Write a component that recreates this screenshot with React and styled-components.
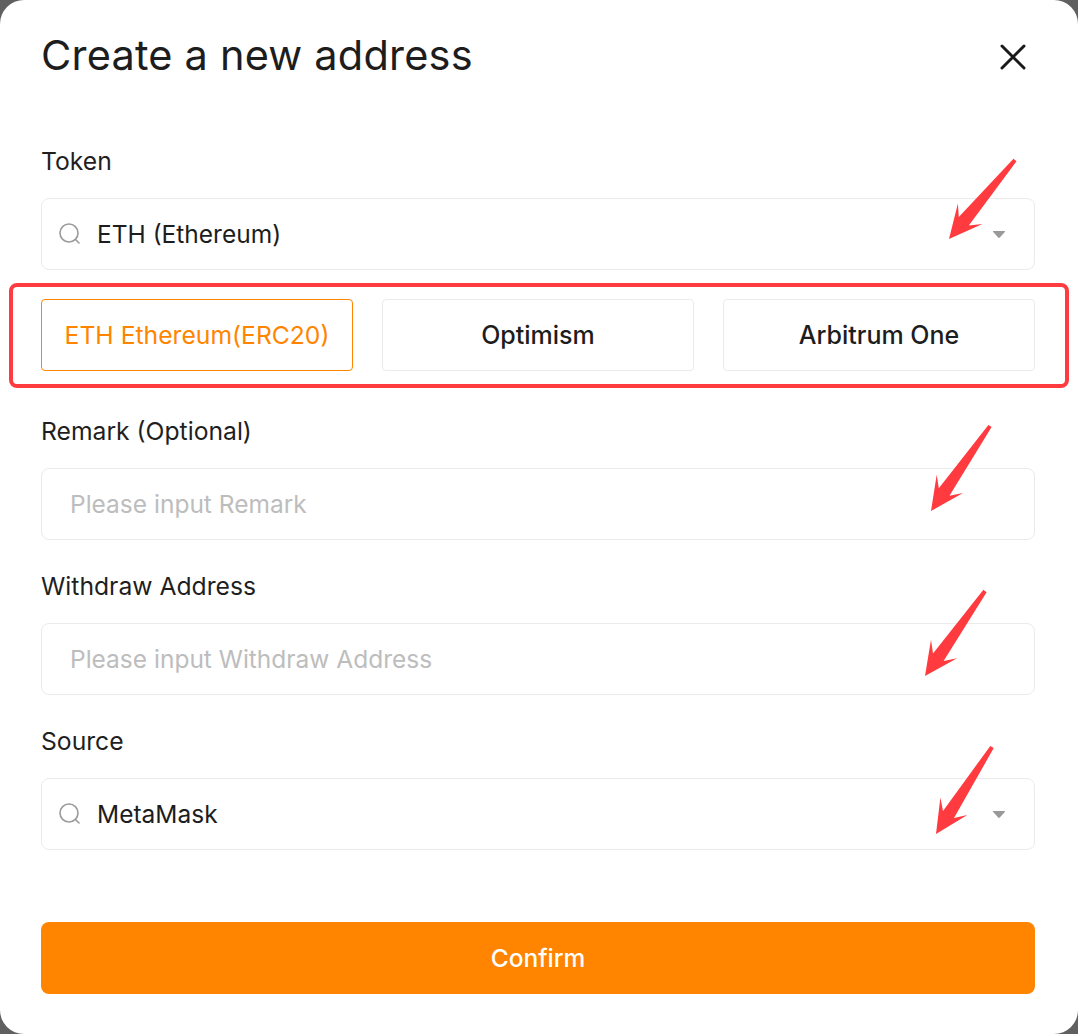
import React from "react"
import styled, { createGlobalStyle } from "styled-components"

const GlobalStyle = createGlobalStyle`
  html, body {
    margin: 0;
    padding: 0;
    background: #606060;
  }
  * {
    box-sizing: border-box;
  }
`

const FONT = `Inter, "Noto Sans", "Liberation Sans", sans-serif`
const ORANGE = "#ff8500"
const MARK = "#ff3b3f"

const Modal = styled.div`
  position: relative;
  width: 1078px;
  height: 1034px;
  background: #fff;
  border-radius: 24px;
  padding: 0 43px 0 41px;
  font-family: ${FONT};
  color: #1d1d1d;
  overflow: hidden;
`

const Header = styled.div`
  display: flex;
  align-items: center;
  justify-content: space-between;
  height: 56px;
  margin-top: 27px;
  margin-bottom: 61px;
`

const Title = styled.h1`
  margin: 0;
  font-size: 41.5px;
  font-weight: 400;
  line-height: 56px;
  letter-spacing: 0.2px;
`

const CloseButton = styled.button`
  display: flex;
  align-items: center;
  justify-content: center;
  width: 30px;
  height: 30px;
  margin: 4px 7px 0 0;
  padding: 0;
  border: none;
  background: none;
  cursor: pointer;
`

const Field = styled.div`
  display: flex;
  flex-direction: column;
  margin-top: ${(p) => p.$gap || 0}px;
`

const Label = styled.label`
  font-size: 24.7px;
  line-height: 34px;
  margin-bottom: 20px;
  color: #1f1f1f;
`

const Box = styled.div`
  display: flex;
  align-items: center;
  height: 72px;
  border: 1px solid #ebebeb;
  border-radius: 8px;
  padding: 0 28px 0 16px;
  gap: 15px;
`

const BoxText = styled.span`
  flex: 1;
  font-size: 24.5px;
  color: #1d1d1d;
`

const Input = styled.input`
  height: 72px;
  border: 1px solid #ebebeb;
  border-radius: 8px;
  padding: 0 28px;
  font-family: ${FONT};
  font-size: 24.5px;
  color: #1d1d1d;
  outline: none;
  &::placeholder {
    color: #bdbdbd;
  }
`

const NetworkRow = styled.div`
  display: grid;
  grid-template-columns: repeat(3, 1fr);
  gap: 29px;
  margin-top: 29px;
`

const NetworkButton = styled.button`
  height: 72px;
  border: 1px solid ${(p) => (p.$active ? ORANGE : "#ebebeb")};
  border-radius: 4px;
  background: #fff;
  font-family: ${FONT};
  font-size: ${(p) => (p.$active ? 24.7 : 25)}px;
  font-weight: ${(p) => (p.$active ? 400 : 500)};
  color: ${(p) => (p.$active ? ORANGE : "#1d1d1d")};
  cursor: pointer;
`

const ConfirmButton = styled.button`
  width: 100%;
  height: 72px;
  margin-top: 72px;
  border: none;
  border-radius: 8px;
  background: ${ORANGE};
  color: #fff;
  font-family: ${FONT};
  font-size: 24.5px;
  font-weight: 500;
  cursor: pointer;
`

// annotation layer drawn over the form
const Highlight = styled.div`
  position: absolute;
  left: 9px;
  top: 283px;
  width: 1060px;
  height: 105px;
  border: 4px solid ${MARK};
  border-radius: 8px;
  pointer-events: none;
`

const Overlay = styled.svg`
  position: absolute;
  left: 0;
  top: 0;
  pointer-events: none;
`

const SearchIcon = () => (
  <svg width="24" height="24" viewBox="0 0 24 24" fill="none">
    <circle cx="11" cy="11" r="9" stroke="#9a9a9a" strokeWidth="1.6" />
    <path d="M17.5 17.5 L21 21" stroke="#9a9a9a" strokeWidth="1.6" strokeLinecap="round" />
  </svg>
)

const Caret = () => (
  <svg width="14" height="9" viewBox="0 0 14 9">
    <path d="M1.5 1 H12.5 Q13.6 1 12.8 2 L7.8 7.6 Q7 8.4 6.2 7.6 L1.2 2 Q0.4 1 1.5 1 Z" fill="#999" />
  </svg>
)

const CloseIcon = () => (
  <svg width="28" height="28" viewBox="0 0 28 28">
    <path d="M3 3 L25 25 M25 3 L3 25" stroke="#1a1a1a" strokeWidth="3" strokeLinecap="round" />
  </svg>
)

const arrowPoints = ([x1, y1], [x2, y2]) => {
  const dx = x2 - x1
  const dy = y2 - y1
  const len = Math.hypot(dx, dy)
  const ux = dx / len
  const uy = dy / len
  const nx = -uy
  const ny = ux
  const h = 33
  const w = 16
  const pt = (d, s) => [x2 - ux * d + nx * s, y2 - uy * d + ny * s]
  const pts = [
    [x1 + nx * 2, y1 + ny * 2],
    pt(h * 0.7, 6.5),
    pt(h, w),
    [x2, y2],
    pt(h, -w),
    pt(h * 0.7, -6.5),
    [x1 - nx * 2, y1 - ny * 2],
  ]
  return pts.map((p) => p.map((v) => v.toFixed(1)).join(",")).join(" ")
}

const arrows = [
  [[1015, 160], [949, 239]],
  [[990, 426], [931, 511]],
  [[985, 591], [925, 676]],
  [[992, 747], [936, 834]],
]

const Select = ({ value }) => (
  <Box>
    <SearchIcon />
    <BoxText>{value}</BoxText>
    <Caret />
  </Box>
)

const networks = ["ETH Ethereum(ERC20)", "Optimism", "Arbitrum One"]

const App = () => (
  <>
    <GlobalStyle />
    <Modal>
      <Header>
        <Title>Create a new address</Title>
        <CloseButton aria-label="Close">
          <CloseIcon />
        </CloseButton>
      </Header>

      <Field>
        <Label>Token</Label>
        <Select value="ETH (Ethereum)" />
      </Field>

      <NetworkRow>
        {networks.map((n, i) => (
          <NetworkButton key={n} $active={i === 0}>
            {n}
          </NetworkButton>
        ))}
      </NetworkRow>

      <Field $gap={43}>
        <Label>Remark (Optional)</Label>
        <Input placeholder="Please input Remark" />
      </Field>

      <Field $gap={29}>
        <Label>Withdraw Address</Label>
        <Input placeholder="Please input Withdraw Address" />
      </Field>

      <Field $gap={29}>
        <Label>Source</Label>
        <Select value="MetaMask" />
      </Field>

      <ConfirmButton>Confirm</ConfirmButton>

      <Highlight />
      <Overlay width="1078" height="1034">
        {arrows.map(([a, b], i) => (
          <polygon key={i} points={arrowPoints(a, b)} fill={MARK} strokeLinejoin="round" />
        ))}
      </Overlay>
    </Modal>
  </>
)

export default App
